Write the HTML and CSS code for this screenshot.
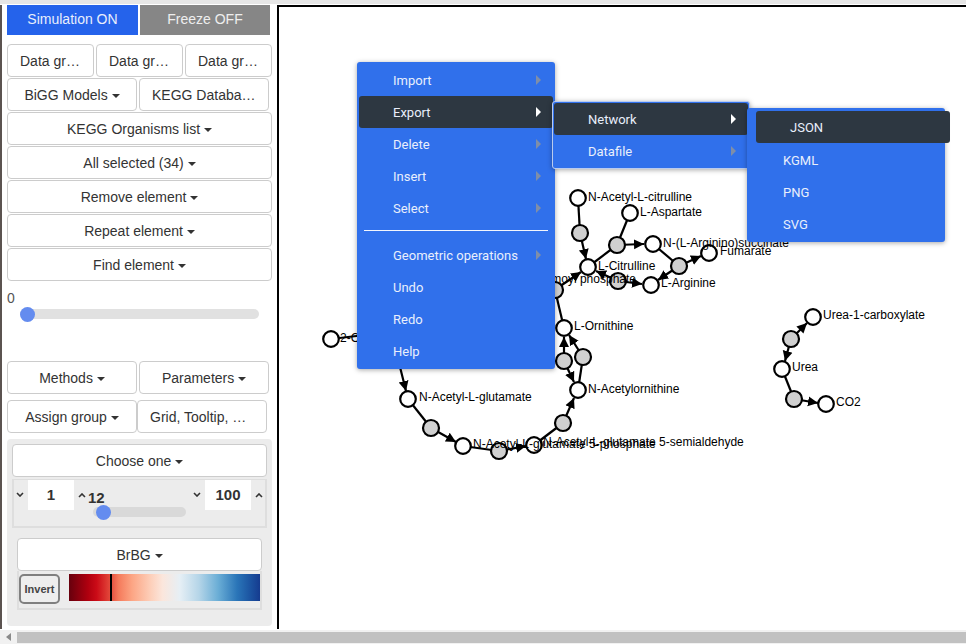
FILE: index.html
```html
<!DOCTYPE html>
<html lang="en">
<head>
    <meta charset="UTF-8">
    <title>Pathway editor</title>
    <link rel="stylesheet" href="styles.css">
</head>
<body>
    <div class="workspace">
        <div class="sidebar">
            <div class="toggles">
                <button class="toggle toggle-on">Simulation ON</button>
                <button class="toggle toggle-off">Freeze OFF</button>
            </div>

            <div class="btn-row">
                <button class="btn third">Data group 1</button>
                <button class="btn third">Data group 2</button>
                <button class="btn third">Data group 3</button>
            </div>
            <div class="btn-row short">
                <button class="btn half">BiGG Models <span class="caret"></span></button>
                <button class="btn half">KEGG Database list</button>
            </div>
            <button class="btn full">KEGG Organisms list <span class="caret"></span></button>
            <button class="btn full">All selected (34) <span class="caret"></span></button>
            <button class="btn full">Remove element <span class="caret"></span></button>
            <button class="btn full">Repeat element <span class="caret"></span></button>
            <button class="btn full">Find element <span class="caret"></span></button>

            <div class="range-value">0</div>
            <div class="slider main-slider"><span class="thumb"></span></div>

            <div class="btn-row short methods-row">
                <button class="btn half">Methods <span class="caret"></span></button>
                <button class="btn half">Parameters <span class="caret"></span></button>
            </div>
            <div class="btn-row tight assign-row">
                <button class="btn half">Assign group <span class="caret"></span></button>
                <button class="btn half">Grid, Tooltip, Labels</button>
            </div>

            <div class="panel">
                <button class="btn choose">Choose one <span class="caret"></span></button>
                <div class="range-box">
                    <div class="spin">
                        <svg class="chev" viewBox="0 0 8 5"><polyline points="1,1 4,4 7,1"/></svg>
                        <span class="num">1</span>
                        <svg class="chev chev-up" viewBox="0 0 8 5"><polyline points="1,4 4,1 7,4"/></svg>
                        <span class="mid-value">12</span>
                        <svg class="chev chev-right" viewBox="0 0 8 5"><polyline points="1,1 4,4 7,1"/></svg>
                        <span class="num">100</span>
                        <svg class="chev chev-up" viewBox="0 0 8 5"><polyline points="1,4 4,1 7,4"/></svg>
                    </div>
                    <div class="slider small-slider"><span class="thumb"></span></div>
                </div>
                <button class="btn palette-btn">BrBG <span class="caret"></span></button>
                <div class="palette-box">
                    <button class="invert">Invert</button>
                    <div class="gradient"><span class="marker"></span></div>
                </div>
            </div>
        </div>

        <div class="canvas">
            <svg class="network" viewBox="279 7 687 622">
                <defs>
                    <marker id="arrow" markerUnits="userSpaceOnUse" markerWidth="11" markerHeight="11" refX="10" refY="5.5" orient="auto">
                        <path d="M0,0.5 L10,5.5 L0,10.5 Z" fill="#000"/>
                    </marker>
                </defs>
                <g class="edges">
                    <line x1="578" y1="198" x2="580" y2="233"/>
                    <line x1="580" y1="233" x2="586" y2="259" marker-end="url(#arrow)"/>
                    <line x1="630" y1="213" x2="617" y2="245"/>
                    <line x1="617" y1="245" x2="588" y2="267"/>
                    <line x1="617" y1="245" x2="644" y2="244" marker-end="url(#arrow)"/>
                    <line x1="653" y1="244" x2="679" y2="266"/>
                    <line x1="679" y1="266" x2="701" y2="256" marker-end="url(#arrow)"/>
                    <line x1="679" y1="266" x2="658" y2="280" marker-end="url(#arrow)"/>
                    <line x1="618" y1="281" x2="642" y2="284" marker-end="url(#arrow)"/>
                    <line x1="618" y1="281" x2="596" y2="271" marker-end="url(#arrow)"/>
                    <line x1="550" y1="293" x2="581" y2="272" marker-end="url(#arrow)"/>
                    <line x1="555" y1="290" x2="564" y2="328"/>
                    <line x1="564" y1="361" x2="564" y2="337" marker-end="url(#arrow)"/>
                    <line x1="583" y1="357" x2="569" y2="335" marker-end="url(#arrow)"/>
                    <line x1="564" y1="361" x2="574" y2="382" marker-end="url(#arrow)"/>
                    <line x1="583" y1="357" x2="578" y2="390"/>
                    <line x1="563" y1="423" x2="574" y2="398" marker-end="url(#arrow)"/>
                    <line x1="534" y1="445" x2="563" y2="423"/>
                    <line x1="499" y1="451" x2="526" y2="446" marker-end="url(#arrow)"/>
                    <line x1="463" y1="446" x2="499" y2="451"/>
                    <line x1="431" y1="428" x2="456" y2="442" marker-end="url(#arrow)"/>
                    <line x1="408" y1="399" x2="431" y2="428"/>
                    <line x1="397" y1="355" x2="406" y2="391" marker-end="url(#arrow)"/>
                    <line x1="331" y1="339" x2="365" y2="335"/>
                    <line x1="791" y1="339" x2="807" y2="323" marker-end="url(#arrow)"/>
                    <line x1="791" y1="339" x2="785" y2="361" marker-end="url(#arrow)"/>
                    <line x1="782" y1="369" x2="794" y2="399"/>
                    <line x1="794" y1="399" x2="818" y2="403" marker-end="url(#arrow)"/>
                </g>
                <g class="reactions">
                    <circle cx="580" cy="233" r="8"/>
                    <circle cx="617" cy="245" r="8"/>
                    <circle cx="679" cy="266" r="8"/>
                    <circle cx="618" cy="281" r="8"/>
                    <circle cx="555" cy="290" r="8"/>
                    <circle cx="564" cy="361" r="8"/>
                    <circle cx="583" cy="357" r="8"/>
                    <circle cx="563" cy="423" r="8"/>
                    <circle cx="499" cy="451" r="8"/>
                    <circle cx="431" cy="428" r="8"/>
                    <circle cx="791" cy="339" r="8"/>
                    <circle cx="794" cy="399" r="8"/>
                </g>
                <g class="metabolites">
                    <circle cx="578" cy="198" r="7.8"/>
                    <circle cx="630" cy="213" r="7.8"/>
                    <circle cx="653" cy="244" r="7.8"/>
                    <circle cx="709" cy="253" r="7.8"/>
                    <circle cx="588" cy="267" r="7.8"/>
                    <circle cx="651" cy="285" r="7.8"/>
                    <circle cx="564" cy="328" r="7.8"/>
                    <circle cx="578" cy="390" r="7.8"/>
                    <circle cx="534" cy="445" r="7.8"/>
                    <circle cx="463" cy="446" r="7.8"/>
                    <circle cx="408" cy="399" r="7.8"/>
                    <circle cx="331" cy="339" r="7.8"/>
                    <circle cx="813" cy="317" r="7.8"/>
                    <circle cx="782" cy="369" r="7.8"/>
                    <circle cx="826" cy="404" r="7.8"/>
                </g>
                <g class="labels">
                    <text x="588" y="201">N-Acetyl-L-citrulline</text>
                    <text x="640" y="216">L-Aspartate</text>
                    <text x="663" y="247">N-(L-Arginino)succinate</text>
                    <text x="720" y="255">Fumarate</text>
                    <text x="598" y="270">L-Citrulline</text>
                    <text x="661" y="287">L-Arginine</text>
                    <text x="636" y="283" text-anchor="end">Carbamoyl phosphate</text>
                    <text x="574" y="330">L-Ornithine</text>
                    <text x="588" y="393">N-Acetylornithine</text>
                    <text x="543" y="446">N-Acetyl-L-glutamate 5-semialdehyde</text>
                    <text x="473" y="448">N-Acetyl-L-glutamate 5-phosphate</text>
                    <text x="419" y="401">N-Acetyl-L-glutamate</text>
                    <text x="340" y="342">2-Oxoglutarate</text>
                    <text x="823" y="319">Urea-1-carboxylate</text>
                    <text x="792" y="371">Urea</text>
                    <text x="836" y="406">CO2</text>
                </g>
            </svg>
        </div>
    </div>

    <div class="scrollbar">
        <span class="scroll-arrow"></span>
        <span class="scroll-thumb"></span>
    </div>

    <!-- context menu -->
    <ul class="menu menu-main">
        <li class="item">Import<span class="arrow"></span></li>
        <li class="item active">Export<span class="arrow"></span></li>
        <li class="item">Delete<span class="arrow"></span></li>
        <li class="item">Insert<span class="arrow"></span></li>
        <li class="item">Select<span class="arrow"></span></li>
        <li class="sep"></li>
        <li class="item">Geometric operations<span class="arrow"></span></li>
        <li class="item">Undo</li>
        <li class="item">Redo</li>
        <li class="item">Help</li>
    </ul>
    <ul class="menu menu-sub">
        <li class="item active">Network<span class="arrow"></span></li>
        <li class="item">Datafile<span class="arrow"></span></li>
    </ul>
    <ul class="menu menu-sub2">
        <li class="item active shifted">JSON</li>
        <li class="item">KGML</li>
        <li class="item">PNG</li>
        <li class="item">SVG</li>
    </ul>
</body>
</html>
```

FILE: styles.css
```css
* {
    box-sizing: border-box;
}
body {
    margin: 0;
    width: 966px;
    height: 644px;
    overflow: hidden;
    position: relative;
    display: flex;
    flex-direction: column;
    background: white;
    border-top: 4px solid #e6e6e6;
    padding-top: 1px;
    font-family: "Liberation Sans", Arial, sans-serif;
    font-size: 14px;
    color: #333;
}
button {
    font-family: inherit;
    cursor: pointer;
}
.workspace {
    display: flex;
    height: 624px;
}
.sidebar {
    width: 277px;
    flex: none;
    padding-left: 5px;
    border-left: 2px solid #5b5350;
}
.toggles {
    display: flex;
    gap: 2px;
    margin-bottom: 9px;
}
.toggle {
    height: 30px;
    border: none;
    font-size: 14px;
    padding: 0 0 2px;
}
.toggle-on {
    width: 131px;
    background-color: #2563eb;
    color: #e8eefc;
}
.toggle-off {
    width: 130px;
    background-color: #868686;
    color: #eee;
}
.btn {
    height: 33px;
    padding: 0 12px;
    background: white;
    border: 1px solid #ccc;
    border-radius: 4px;
    color: #333;
    font-size: 14px;
    white-space: nowrap;
    overflow: hidden;
    text-overflow: ellipsis;
}
.btn-row {
    display: flex;
    gap: 2px;
    margin-bottom: 1px;
}
.btn-row.tight {
    gap: 0;
}
.third {
    width: 87px;
}
.half {
    width: 130px;
}
.full {
    display: block;
    width: 265px;
    margin-bottom: 1px;
}
.caret {
    display: inline-block;
    width: 0;
    height: 0;
    vertical-align: middle;
    border-top: 4px solid #333;
    border-left: 4px solid transparent;
    border-right: 4px solid transparent;
}
.range-value {
    margin-top: 9px;
    height: 16px;
    line-height: 16px;
    color: #555;
}
.slider {
    position: relative;
    height: 10px;
    border-radius: 5px;
    background: #e1e1e1;
}
.thumb {
    position: absolute;
    top: -2.5px;
    width: 15px;
    height: 15px;
    border-radius: 50%;
    background: #648cef;
}
.main-slider {
    width: 239px;
    margin: 3px 0 0 13px;
}
.main-slider .thumb {
    left: 0;
}
.methods-row {
    margin-top: 42px;
    margin-bottom: 6px;
}
.assign-row {
    margin-bottom: 6px;
}
.panel {
    width: 265px;
    height: 187px;
    padding: 5px;
    background: #ececec;
    border-radius: 4px;
}
.choose {
    display: block;
    width: 255px;
    margin-bottom: 2px;
}
.range-box {
    position: relative;
    width: 255px;
    height: 49px;
    margin-bottom: 10px;
    border: 2px solid #dedede;
    border-top-width: 1px;
}
.spin {
    display: flex;
    align-items: flex-start;
    height: 30px;
}
.chev {
    width: 8px;
    height: 5px;
    flex: none;
    margin: 12px 0 0 2px;
    fill: none;
    stroke: #333;
    stroke-width: 1.6;
}
.chev-up {
    margin: 13px 0 0 4px;
}
.chev-right {
    margin-left: 0;
}
.num {
    width: 46px;
    height: 30px;
    margin-left: 4px;
    flex: none;
    line-height: 30px;
    background: white;
    text-align: center;
    font-weight: bold;
    font-size: 15px;
}
.mid-value {
    width: 107px;
    flex: none;
    padding: 9px 0 0 2px;
    font-weight: bold;
    font-size: 15px;
    line-height: 17px;
}
.small-slider {
    width: 93px;
    margin: -3px 0 0 79px;
    background: #d9d9d9;
}
.small-slider .thumb {
    left: 2.5px;
}
.palette-btn {
    display: block;
    width: 245px;
    margin-left: 5px;
}
.palette-box {
    display: flex;
    gap: 9px;
    width: 245px;
    height: 39px;
    margin: 0 0 0 5px;
    padding: 3px 0 0;
    background: #ececec;
    border: 2px solid #dedede;
    border-top: none;
}
.invert {
    width: 41px;
    height: 30px;
    padding: 0;
    flex: none;
    background: #eee;
    border: 2px solid #808080;
    border-radius: 5px;
    font-size: 11px;
    font-weight: bold;
    color: #444;
}
.gradient {
    position: relative;
    width: 191px;
    height: 27px;
    background: linear-gradient(to right, #67000d 0%, #b0000f 10%, #cb0b17 14.5%, #e3493b 21.5%, #f57b5c 26%, #fca584 33%, #fdd0bb 43%, #fbe6dc 49%, #e6eff5 58%, #b5d5e8 68%, #6baed6 78%, #2a75b8 88%, #1d58a4 94%, #153b8f 100%);
}
.marker {
    position: absolute;
    left: 41px;
    top: 0;
    width: 2px;
    height: 27px;
    background: #000;
}
.canvas {
    flex: 1;
    border-left: 2px solid #000;
    border-top: 2px solid #000;
}
.network {
    display: block;
    width: 687px;
    height: 622px;
}
.edges line {
    stroke: #000;
    stroke-width: 2.2;
}
.reactions circle {
    fill: #d0d0d0;
    stroke: #000;
    stroke-width: 2.2;
}
.metabolites circle {
    fill: white;
    stroke: #000;
    stroke-width: 2.2;
}
.labels text {
    font-family: "Liberation Sans", Arial, sans-serif;
    font-size: 12px;
    fill: #000;
}
.scrollbar {
    display: flex;
    align-items: center;
    height: 14px;
    margin-top: 1px;
    background: #f1f1f1;
}
.scroll-arrow {
    width: 0;
    height: 0;
    margin: 0 6px 0 6px;
    border-top: 4px solid transparent;
    border-bottom: 4px solid transparent;
    border-right: 5px solid #8a8a8a;
}
.scroll-thumb {
    flex: 1;
    height: 11px;
    background: #c1c1c1;
}
.menu {
    position: absolute;
    margin: 0;
    padding: 2px;
    width: 198px;
    list-style: none;
    background: #3070eb;
    border-radius: 3px;
    box-shadow: 0 1px 5px rgba(0, 0, 0, 0.35);
}
.menu-main {
    left: 357px;
    top: 58px;
    height: 307px;
}
.menu-sub {
    left: 552px;
    top: 97px;
    height: 68px;
    border: 1px solid #b9cbee;
    padding: 1px;
}
.menu-sub2 {
    left: 747px;
    top: 104px;
    height: 134px;
    padding: 4px 2px;
}
.item {
    display: flex;
    align-items: center;
    height: 32px;
    padding: 0 12px 0 34px;
    border-radius: 3px;
    font-family: Roboto, sans-serif;
    font-size: 13px;
    color: #e9effc;
}
.item.active {
    background: #2d3741;
}
.item.shifted {
    transform: translate(7px, -1px);
}
.arrow {
    width: 0;
    height: 0;
    margin-left: auto;
    border-top: 5px solid transparent;
    border-bottom: 5px solid transparent;
    border-left: 5px solid #7f8ea8;
}
.active .arrow {
    border-left-color: white;
}
.sep {
    height: 15px;
    margin: 0 5px;
    padding-top: 6px;
}
.sep::after {
    content: "";
    display: block;
    height: 1px;
    background: #f2f5fd;
}
```
